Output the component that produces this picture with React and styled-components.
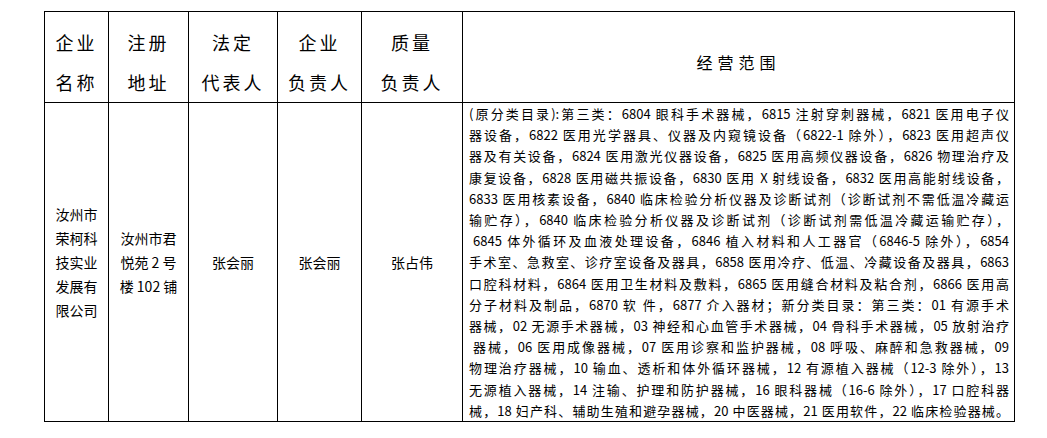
import React from 'react';
import styled, { createGlobalStyle } from 'styled-components';

const Global = createGlobalStyle`
	body {
		margin: 0;
		background: #fff;
		font-family: "Noto Sans CJK SC", "Noto Sans", sans-serif;
		color: #000;
	}
`;

const Page = styled.div`
	padding: 11px 0 0 44px;
`;

const Table = styled.table`
	border-collapse: collapse;
	table-layout: fixed;
	width: 970px;
`;

const Col = styled.col`
	width: ${(p) => p.w}px;
`;

const Head = styled.th`
	border: 1px solid #000;
	padding: 10px 0 0;
	font-weight: 400;
	font-size: ${(p) => (p.small ? 16 : 18)}px;
	letter-spacing: ${(p) => (p.small ? 5 : 3)}px;
	line-height: 40px;
	text-align: center;
	vertical-align: middle;
`;

const Cell = styled.td`
	border: 1px solid #000;
	padding: 0;
	font-size: 14px;
	line-height: 24px;
	text-align: center;
	vertical-align: middle;
`;

const ScopeCell = styled.td`
	border: 1px solid #000;
	padding: 0 5px 0 6px;
	vertical-align: top;
`;

const Line = styled.div`
	font-size: 13px;
	line-height: 21.2px;
	text-align: justify;
	text-align-last: justify;
	padding-left: ${(p) => (p.indent ? 4 : 0)}px;
`;

const scope = [
	'(原分类目录):第三类：6804 眼科手术器械，6815 注射穿刺器械，6821 医用电子仪',
	'器设备，6822 医用光学器具、仪器及内窥镜设备（6822-1 除外），6823 医用超声仪',
	'器及有关设备，6824 医用激光仪器设备，6825 医用高频仪器设备，6826 物理治疗及',
	'康复设备，6828 医用磁共振设备，6830 医用 X 射线设备，6832 医用高能射线设备，',
	'6833 医用核素设备，6840 临床检验分析仪器及诊断试剂（诊断试剂不需低温冷藏运',
	'输贮存），6840 临床检验分析仪器及诊断试剂（诊断试剂需低温冷藏运输贮存），',
	'6845 体外循环及血液处理设备，6846 植入材料和人工器官（6846-5 除外），6854',
	'手术室、急救室、诊疗室设备及器具，6858 医用冷疗、低温、冷藏设备及器具，6863',
	'口腔科材料，6864 医用卫生材料及敷料，6865 医用缝合材料及粘合剂，6866 医用高',
	'分子材料及制品，6870 软 件，6877 介入器材；新分类目录：第三类：01 有源手术',
	'器械，02 无源手术器械，03 神经和心血管手术器械，04 骨科手术器械，05 放射治疗',
	'器械，06 医用成像器械，07 医用诊察和监护器械，08 呼吸、麻醉和急救器械，09',
	'物理治疗器械，10 输血、透析和体外循环器械，12 有源植入器械（12-3 除外），13',
	'无源植入器械，14 注输、护理和防护器械，16 眼科器械（16-6 除外），17 口腔科器',
	'械，18 妇产科、辅助生殖和避孕器械，20 中医器械，21 医用软件，22 临床检验器械。',
];

const indented = [6, 11];

const App = () => {
	return (
		<Page>
			<Global />
			<Table>
				<colgroup>
					<Col w={64} />
					<Col w={80} />
					<Col w={89} />
					<Col w={84} />
					<Col w={101} />
					<Col w={552} />
				</colgroup>
				<thead>
					<tr>
						<Head>企业<br />名称</Head>
						<Head>注册<br />地址</Head>
						<Head>法定<br />代表人</Head>
						<Head>企业<br />负责人</Head>
						<Head>质量<br />负责人</Head>
						<Head small>经营范围</Head>
					</tr>
				</thead>
				<tbody>
					<tr>
						<Cell>汝州市<br />荣柯科<br />技实业<br />发展有<br />限公司</Cell>
						<Cell>汝州市君<br />悦苑 2 号<br />楼 102 铺</Cell>
						<Cell>张会丽</Cell>
						<Cell>张会丽</Cell>
						<Cell>张占伟</Cell>
						<ScopeCell>
							{scope.map((t, i) => (
								<Line key={i} indent={indented.includes(i)}>{t}</Line>
							))}
						</ScopeCell>
					</tr>
				</tbody>
			</Table>
		</Page>
	);
};

export default App;
